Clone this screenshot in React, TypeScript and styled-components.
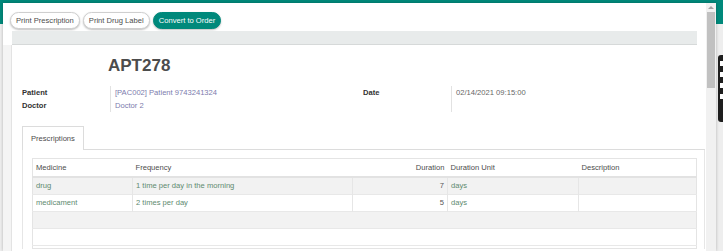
import React from 'react';
import styled, { createGlobalStyle } from 'styled-components';

const GlobalStyle = createGlobalStyle`
  html, body {
    margin: 0;
    padding: 0;
  }
  body {
    font-family: "Liberation Sans", Arial, sans-serif;
    font-size: 7.6px;
    color: #4c4c4c;
  }
`;

const Screen = styled.div`
  position: relative;
  width: 723px;
  height: 251px;
  overflow: hidden;
  background: #eeeeee;
`;

const NavBar = styled.div`
  height: 24px;
  background: #00897b;
`;

const Modal = styled.div`
  position: absolute;
  left: 3px;
  top: 3px;
  right: 7px;
  bottom: 0;
  display: flex;
  background: #fff;
  box-shadow: 0 0 3px rgba(0, 0, 0, 0.25);
`;

const Body = styled.div`
  flex: 1;
  min-width: 0;
  display: flex;
  flex-direction: column;
`;

const ButtonBar = styled.div`
  display: flex;
  gap: 3px;
  padding: 9px 0 0 7px;
`;

const Button = styled.button<{ $primary?: boolean }>`
  height: 17px;
  padding: 0 5px;
  border-radius: 9px;
  border: 1px solid ${(p) => (p.$primary ? '#00897b' : '#cfcfcf')};
  background: ${(p) => (p.$primary ? '#00897b' : '#fff')};
  color: ${(p) => (p.$primary ? '#fff' : '#4c4c4c')};
  font: inherit;
  line-height: 15px;
  box-shadow: 0 1px 2px rgba(0, 0, 0, 0.25);
  white-space: nowrap;
`;

const StatusBar = styled.div`
  height: 13px;
  margin: 2px 9px 0 9px;
  background: #e8ebeb;
  border-bottom: 1px solid #d6d9d9;
`;

const SheetArea = styled.div`
  flex: 1;
  display: flex;
  min-height: 0;
`;

const Gutter = styled.div`
  width: 8px;
  background: #f4f4f4;
  border-right: 1px solid #e3e3e3;
`;

const Sheet = styled.div`
  flex: 1;
  min-width: 0;
  padding: 10px 1px 0 10px;
`;

const Title = styled.h1`
  margin: 0 0 0 86px;
  font-size: 17px;
  line-height: 22px;
  font-weight: bold;
  color: #4c4c4c;
`;

const Groups = styled.div`
  display: grid;
  grid-template-columns: 341px 1fr;
  margin-top: 9px;
`;

const Group = styled.div`
  display: grid;
  grid-template-columns: 88px 1fr;
  grid-auto-rows: 13px;
`;

const Label = styled.div`
  font-weight: bold;
  color: #333;
  line-height: 13px;
`;

const Value = styled.div<{ $link?: boolean }>`
  border-left: 1px solid #e2e2e2;
  padding-left: 4px;
  line-height: 13px;
  color: ${(p) => (p.$link ? '#7c7bad' : '#666')};
`;

const Notebook = styled.div`
  margin-top: 14px;
`;

const TabStrip = styled.div`
  display: flex;
  border-bottom: 1px solid #dcdcdc;
  height: 23px;
`;

const Tab = styled.div`
  height: 24px;
  box-sizing: border-box;
  padding: 0 8px;
  border: 1px solid #dcdcdc;
  border-bottom: none;
  background: #fff;
  line-height: 23px;
  color: #4c4c4c;
`;

const Pane = styled.div`
  border-left: 1px solid #e6e6e6;
  border-right: 1px solid #e6e6e6;
  padding: 8px 7px 0 9px;
`;

const Table = styled.table`
  width: 664px;
  border-collapse: collapse;
  table-layout: fixed;
  border: 1px solid #e4e4e4;
`;

const Th = styled.th<{ $right?: boolean }>`
  height: 17px;
  padding: 0 3px;
  text-align: ${(p) => (p.$right ? 'right' : 'left')};
  font-weight: normal;
  color: #4c4c4c;
  background: #fff;
  border-bottom: 2px solid #e2e2e2;
`;

const Row = styled.tr<{ $striped?: boolean }>`
  height: 17px;
  background: ${(p) => (p.$striped ? '#f2f2f2' : '#fff')};
  border-bottom: 1px solid #e8e8e8;
`;

const Td = styled.td<{ $right?: boolean; $num?: boolean }>`
  padding: 0 3px;
  text-align: ${(p) => (p.$right ? 'right' : 'left')};
  color: ${(p) => (p.$num ? '#555' : '#5e8a6f')};
  border-left: 1px solid #e6e6e6;
  &:first-child {
    border-left: none;
  }
`;

const EmptyRow = styled.tr<{ $striped?: boolean }>`
  height: 17px;
  background: ${(p) => (p.$striped ? '#f2f2f2' : '#fff')};
  border-bottom: 1px solid #e8e8e8;
`;

const FootRow = styled.tr`
  height: 2px;
`;

const Scrollbar = styled.div`
  width: 10px;
  background: #f1f1f1;
  display: flex;
  flex-direction: column;
  align-items: center;
`;

const ArrowUp = styled.div`
  margin-top: 3px;
  width: 0;
  height: 0;
  border-left: 3px solid transparent;
  border-right: 3px solid transparent;
  border-bottom: 3px solid #a3a3a3;
`;

const Thumb = styled.div`
  margin-top: 3px;
  width: 8px;
  height: 76px;
  background: #c1c1c1;
`;

const SideWidget = styled.div`
  position: absolute;
  right: -4px;
  top: 55px;
  width: 9px;
  height: 67px;
  border-radius: 3px;
  background: #1e1e1e;
  display: flex;
  flex-direction: column;
  gap: 6px;
  padding: 6px 0 0 2px;
  box-sizing: border-box;
`;

const WidgetMark = styled.div`
  width: 3px;
  height: 5px;
  background: #fff;
`;

const prescriptions = [
  { medicine: 'drug', frequency: '1 time per day in the morning', duration: 7, unit: 'days' },
  { medicine: 'medicament', frequency: '2 times per day', duration: 5, unit: 'days' },
];

export default function App() {
  return (
    <>
      <GlobalStyle />
      <Screen>
        <NavBar />
        <Modal>
          <Body>
            <ButtonBar>
              <Button>Print Prescription</Button>
              <Button>Print Drug Label</Button>
              <Button $primary>Convert to Order</Button>
            </ButtonBar>
            <StatusBar />
            <SheetArea>
              <Gutter />
              <Sheet>
                <Title>APT278</Title>
                <Groups>
                  <Group>
                    <Label>Patient</Label>
                    <Value $link>[PAC002] Patient 9743241324</Value>
                    <Label>Doctor</Label>
                    <Value $link>Doctor 2</Value>
                  </Group>
                  <Group>
                    <Label>Date</Label>
                    <Value>02/14/2021 09:15:00</Value>
                    <Label />
                    <Value />
                  </Group>
                </Groups>
                <Notebook>
                  <TabStrip>
                    <Tab>Prescriptions</Tab>
                  </TabStrip>
                  <Pane>
                    <Table>
                      <colgroup>
                        <col style={{ width: 100 }} />
                        <col style={{ width: 220 }} />
                        <col style={{ width: 95 }} />
                        <col style={{ width: 131 }} />
                        <col style={{ width: 118 }} />
                      </colgroup>
                      <thead>
                        <tr>
                          <Th>Medicine</Th>
                          <Th>Frequency</Th>
                          <Th $right>Duration</Th>
                          <Th>Duration Unit</Th>
                          <Th>Description</Th>
                        </tr>
                      </thead>
                      <tbody>
                        {prescriptions.map((p, i) => (
                          <Row key={p.medicine} $striped={i % 2 === 0}>
                            <Td>{p.medicine}</Td>
                            <Td>{p.frequency}</Td>
                            <Td $right $num>{p.duration}</Td>
                            <Td>{p.unit}</Td>
                            <Td />
                          </Row>
                        ))}
                        <EmptyRow $striped>
                          <td colSpan={5} />
                        </EmptyRow>
                        <EmptyRow>
                          <td colSpan={5} />
                        </EmptyRow>
                      </tbody>
                      <tfoot>
                        <FootRow>
                          <td colSpan={5} />
                        </FootRow>
                      </tfoot>
                    </Table>
                  </Pane>
                </Notebook>
              </Sheet>
            </SheetArea>
          </Body>
          <Scrollbar>
            <ArrowUp />
            <Thumb />
          </Scrollbar>
        </Modal>
        <SideWidget>
          <WidgetMark />
          <WidgetMark />
          <WidgetMark />
          <WidgetMark />
        </SideWidget>
      </Screen>
    </>
  );
}
